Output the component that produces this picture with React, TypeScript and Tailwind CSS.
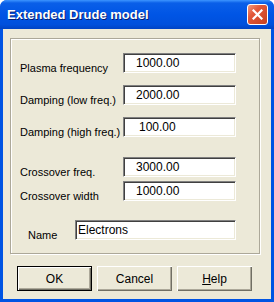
import React from 'react'

// champs du modèle de Drude étendu
const rows = [
  { label: 'Plasma frequency', value: '1000.00', pad: 'pl-[12px]', gap: 'mt-0' },
  { label: 'Damping (low freq.)', value: '2000.00', pad: 'pl-[12px]', gap: 'mt-[12px]' },
  { label: 'Damping (high freq.)', value: '100.00', pad: 'pl-[15px]', gap: 'mt-[12px]' },
  { label: 'Crossover freq.', value: '3000.00', pad: 'pl-[12px]', gap: 'mt-[20px]' },
  { label: 'Crossover width', value: '1000.00', pad: 'pl-[12px]', gap: 'mt-[4px]' },
]

const sunken =
  'h-[20px] bg-white border border-t-[#808080] border-l-[#808080] border-r-white border-b-white shadow-[inset_1px_1px_0_#404040,inset_-1px_-1px_0_#ece9d8] flex items-center text-[12px] text-black'

function XpButton({ children, isDefault }: { children: React.ReactNode; isDefault?: boolean }) {
  return (
    <div
      className={
        'w-[75px] h-[25px] flex items-center justify-center text-[12px] text-black bg-[#ece9d8] ' +
        (isDefault
          ? 'border border-black shadow-[inset_1px_1px_0_#fff,inset_-1px_-1px_0_#716f64,inset_-2px_-2px_0_#aca899]'
          : 'shadow-[inset_1px_1px_0_#fff,inset_-1px_-1px_0_#716f64,inset_-2px_-2px_0_#aca899]')
      }
    >
      {children}
    </div>
  )
}

export default function App() {
  return (
    <div
      className="w-[274px] h-[302px] flex flex-col bg-[#0054e3] rounded-t-[7px] overflow-hidden"
      style={{ fontFamily: '"Liberation Sans", Arial, sans-serif' }}
    >
      {/* barre de titre */}
      <div className="h-[29px] shrink-0 flex items-center justify-between pl-[7px] pr-[6px] bg-[linear-gradient(180deg,#3d95ff_0px,#0a5fe8_3px,#0055e5_50%,#0050dc_85%,#0043c4_100%)]">
        <span className="text-white font-bold text-[13px] [text-shadow:1px_1px_0_#0a1e6e]">
          Extended Drude model
        </span>
        <div className="w-[21px] h-[21px] rounded-[3px] border border-white bg-[linear-gradient(135deg,#f29a7e_0%,#e2583a_35%,#c7401e_100%)] flex items-center justify-center">
          <svg width="11" height="11" viewBox="0 0 11 11">
            <path d="M1.5 1.5 L9.5 9.5 M9.5 1.5 L1.5 9.5" stroke="white" strokeWidth="2.2" strokeLinecap="square" />
          </svg>
        </div>
      </div>

      {/* corps de la boîte */}
      <div className="flex-1 mx-[3px] mb-[3px] bg-[#ece9d8] pt-[9px] pl-[7px] pr-[11px]">
        <div className="h-[216px] border border-[#aca899] shadow-[inset_1px_1px_0_#fff,1px_1px_0_#fff] pt-[14px] pl-[9px]">
          {rows.map((r) => (
            <div key={r.label} className={'flex h-[20px] ' + r.gap}>
              <span className="w-[103px] mt-[8px] leading-[14px] text-[11px] text-black whitespace-nowrap">
                {r.label}
              </span>
              <div className={sunken + ' w-[113px] ' + r.pad}>{r.value}</div>
            </div>
          ))}
          <div className="flex h-[20px] mt-[19px]">
            <span className="w-[55px] pl-[8px] mt-[8px] leading-[14px] text-[11px] text-black">Name</span>
            <div className={sunken + ' w-[161px] pl-[2px]'}>Electrons</div>
          </div>
        </div>

        <div className="flex gap-[5px] mt-[12px] pl-[7px]">
          <XpButton isDefault>OK</XpButton>
          <XpButton>Cancel</XpButton>
          <XpButton>
            <span>
              <span className="underline">H</span>elp
            </span>
          </XpButton>
        </div>
      </div>
    </div>
  )
}
